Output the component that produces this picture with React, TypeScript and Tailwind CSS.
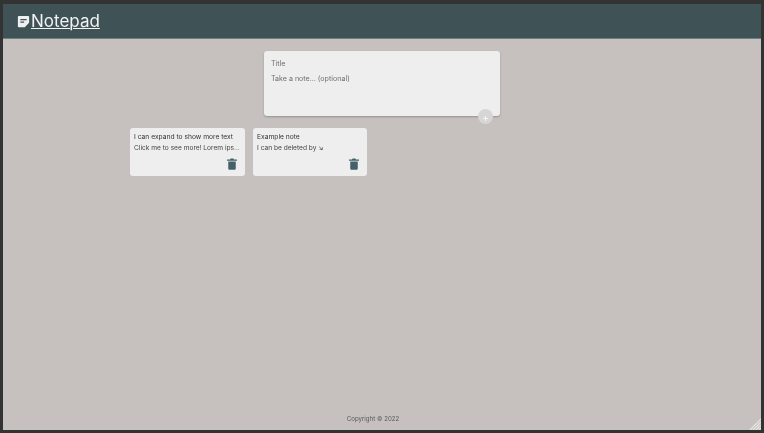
import React from "react";

function Trash() {
  return (
    <svg viewBox="0 0 12 14" className="w-[10px] h-[12px] text-[#44616a]" fill="currentColor">
      <path d="M1.500 4h9v8.500c0 .8-.7 1.500-1.500 1.500H3c-.8 0-1.500-.7-1.500-1.500V4zM0 1.500h3.500L4.500.500h3l1 1H12V3H0V1.500z" />
    </svg>
  );
}

function Note({ title, body, width }: { title: string; body: string; width: string }) {
  return (
    <div className={`${width} h-[48px] shrink-0 bg-[#eeeeee] rounded-[3px] px-[4px] pt-[4px] flex flex-col`}>
      <div className="text-[6.700px] leading-[10px] text-[#333333] whitespace-nowrap">{title}</div>
      <div className="text-[6.600px] leading-[10px] mt-[1px] text-[#444444] whitespace-nowrap">{body}</div>
      <div className="flex justify-end pr-[4px] mt-[5px]">
        <Trash />
      </div>
    </div>
  );
}

export default function App() {
  return (
    <div className="h-[433px] w-[764px] overflow-hidden bg-[#333333] pt-[4px] pl-[3px] pr-[3px] pb-[3px] font-['Inter',sans-serif]">
      <div className="relative h-full flex flex-col bg-[#c6c1be] blur-[0.35px]">
        <header className="h-[35px] shrink-0 bg-[#3f5357] border-b border-[#6f7f82] flex items-center pl-[13px]">
          <svg viewBox="0 0 24 24" className="w-[15px] h-[15px] text-[#f0f0f0]" fill="currentColor">
            <path d="M3 4.500A1.500 1.500 0 0 1 4.500 3h15A1.500 1.500 0 0 1 21 4.500V14l-7 7H4.500A1.500 1.500 0 0 1 3 19.500V4.500zM7 8v2h10V8H7zm0 4v2h6v-2H7z" />
          </svg>
          <span className="text-[17px] leading-[22px] text-[#f2f2f2] underline underline-offset-[1px] decoration-1 font-normal">Notepad</span>
        </header>

        <main className="flex-1 flex flex-col">
          <div className="flex justify-center pt-[12px]">
            <div className="relative w-[236px] h-[65px] bg-[#eeeeee] rounded-[3px] px-[7px] pt-[8px] shadow-[0_1px_2px_rgba(0,0,0,0.25)]">
              <div className="text-[7.100px] leading-[10px] text-[#6f6f6f]">Title</div>
              <div className="text-[7.100px] leading-[10px] mt-[5px] text-[#6f6f6f]">Take a note... (optional)</div>
              <div className="absolute right-[7px] bottom-[-8px] w-[15px] h-[15px] rounded-full bg-[#d6d6d6] flex items-center justify-center text-white text-[10px] leading-none">
                +
              </div>
            </div>
          </div>

          <div className="flex gap-[8px] pl-[127px] pt-[12px]">
            <Note width="w-[115px]" title="I can expand to show more text" body="Click me to see more! Lorem ips..." />
            <Note width="w-[114px]" title="Example note" body="I can be deleted by ↘" />
          </div>
        </main>

        <footer className="h-[16px] shrink-0 flex justify-center pr-[18px] text-[6.100px] leading-[10px] text-[#55585a]">
          Copyright © 2022
        </footer>

        <svg viewBox="0 0 12 12" className="absolute right-0 bottom-0 w-[12px] h-[12px]" fill="none" stroke="#e6e6e6" strokeWidth="1.200">
          <path d="M1 12L12 1M4 12L12 4M7 12L12 7M10 12L12 10" />
        </svg>
      </div>
    </div>
  );
}
